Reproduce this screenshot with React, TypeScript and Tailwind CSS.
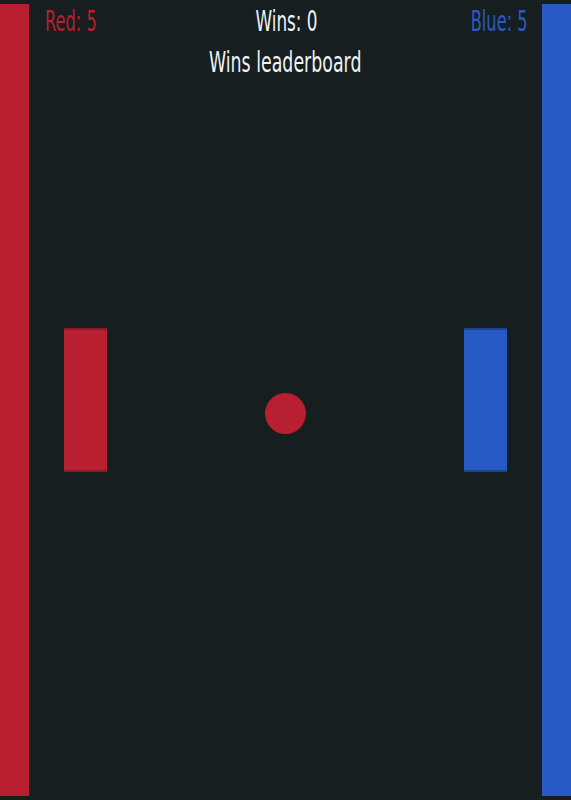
const font = { fontFamily: '"DejaVu Sans", "Liberation Sans", sans-serif' };

function Label({ text, color, origin, scale }: { text: string; color: string; origin: string; scale: string }) {
  return (
    <span
      className={`inline-block text-[29px] leading-[41px] ${scale} ${origin} ${color}`}
      style={font}
    >
      {text}
    </span>
  );
}

export default function App() {
  return (
    <div className="w-[571px] h-[800px] bg-[#161e1f] flex overflow-hidden">
      <div className="w-[29px] my-[4px] bg-[#b81f30] shrink-0" />

      <div className="relative flex-1 flex flex-col pt-[1px]">
        <div className="grid grid-cols-3 items-center pl-[16px] pr-[14px]">
          <div className="text-left">
            <Label text="Red: 5" color="text-[#b81f30]" origin="origin-left" scale="scale-x-[0.56]" />
          </div>
          <div className="text-center whitespace-nowrap">
            <Label text="Wins: 0" color="text-[#eef2f5]" origin="origin-center" scale="scale-x-[0.58]" />
          </div>
          <div className="text-right">
            <Label text="Blue: 5" color="text-[#2a5bc4]" origin="origin-right" scale="scale-x-[0.56]" />
          </div>
        </div>
        <div className="text-center whitespace-nowrap">
          <Label text="Wins leaderboard" color="text-[#eef2f5]" origin="origin-center" scale="scale-x-[0.6]" />
        </div>

        {/* paddles and ball sit on the play field */}
        <div className="absolute left-[35px] top-[328px] w-[43px] h-[144px] bg-[#b81f30] border-y-2 border-[#8c1a29]" />
        <div className="absolute left-[435px] top-[328px] w-[43px] h-[144px] bg-[#285ac6] border-y-2 border-[#1d4390]" />
        <div className="absolute left-[236px] top-[393px] w-[41px] h-[41px] rounded-full bg-[#b81f30]" />
      </div>

      <div className="w-[29px] my-[4px] bg-[#285ac6] shrink-0" />
    </div>
  );
}
